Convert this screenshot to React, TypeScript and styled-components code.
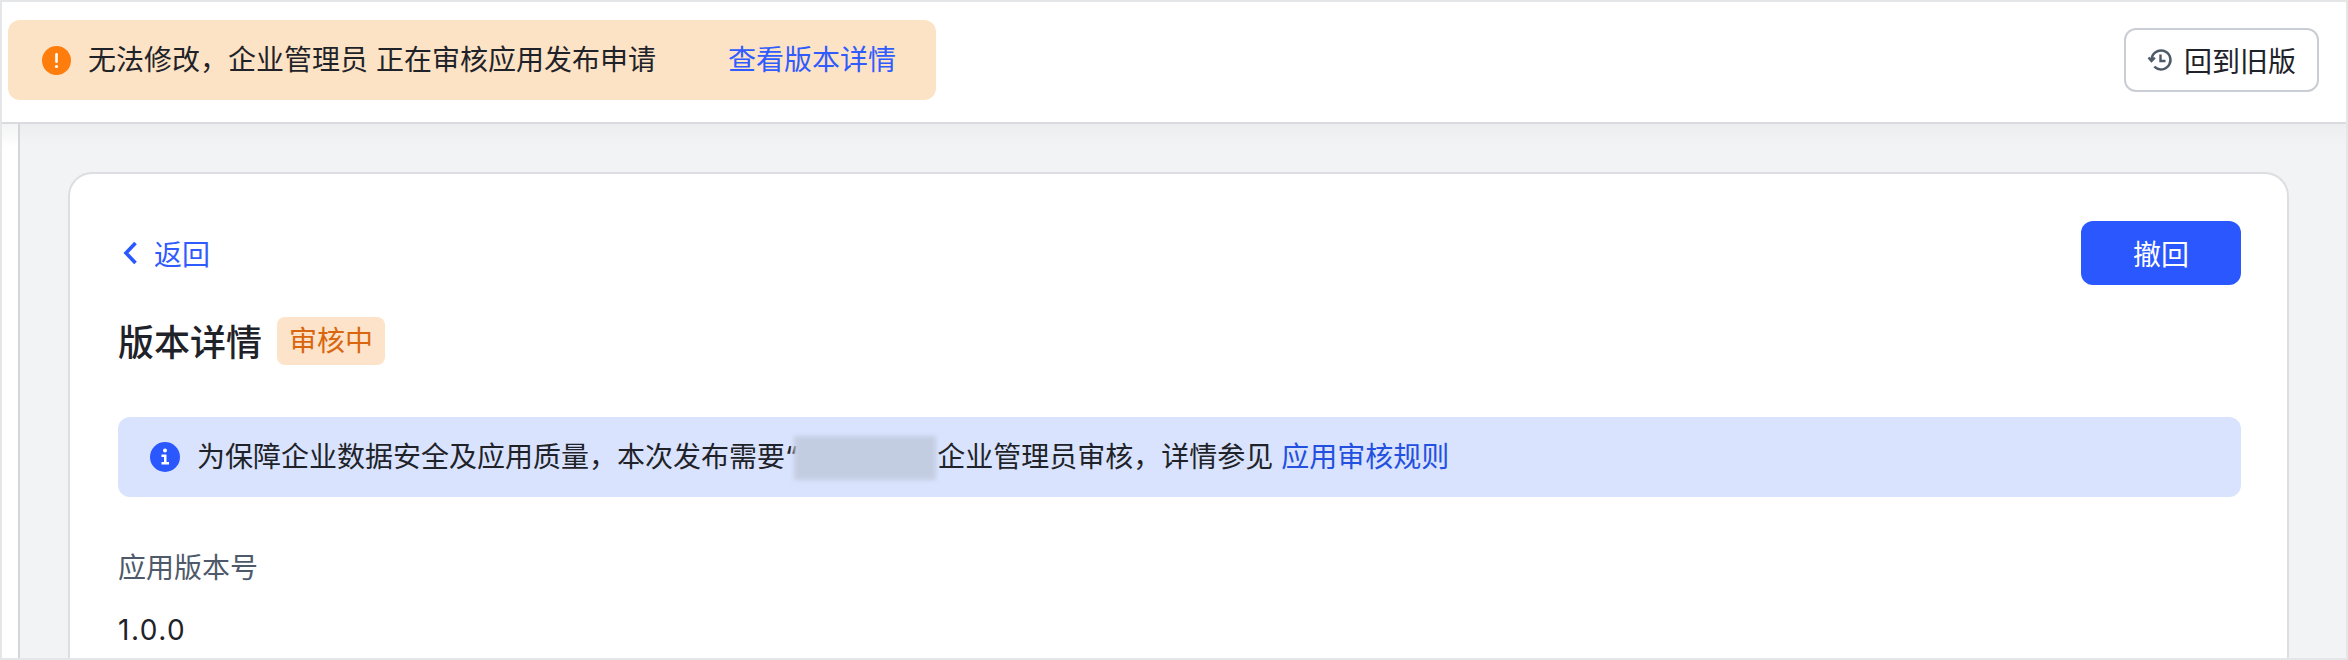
import React, { FC } from "react";
import styled, { createGlobalStyle } from "styled-components";

const FONT = `Inter, "Noto Sans CJK SC", sans-serif`;

const GlobalStyle = createGlobalStyle`
  html, body {
    margin: 0;
    padding: 0;
    background: #fff;
  }
  * {
    box-sizing: border-box;
  }
`;

const Page = styled.div`
  width: 2348px;
  height: 660px;
  overflow: hidden;
  display: flex;
  flex-direction: column;
  font-family: ${FONT};
  font-size: 28px;
  color: #1f2329;
  border: 2px solid #e5e6e8;
`;

const Header = styled.header`
  flex: none;
  height: 122px;
  display: flex;
  align-items: center;
  justify-content: space-between;
  padding: 0 27px 4px 6px;
  background: #fff;
  border-bottom: 2px solid #d9dbde;
`;

const Notice = styled.div`
  width: 928px;
  height: 80px;
  display: flex;
  align-items: center;
  padding-left: 34px;
  border-radius: 12px;
  background: #fde3c5;
`;

const NoticeIcon = styled.svg`
  flex: none;
  width: 29px;
  height: 29px;
  margin-right: 17px;
`;

const NoticeText = styled.span`
  line-height: 40px;
  white-space: pre;
`;

const NoticeLink = styled.a`
  margin-left: 72px;
  line-height: 40px;
  color: #2f5bff;
`;

const OldVersionButton = styled.button`
  width: 195px;
  height: 64px;
  display: flex;
  align-items: center;
  justify-content: center;
  gap: 11px;
  padding: 0 2px 0 2px;
  border: 2px solid #c9cdd4;
  border-radius: 12px;
  background: #fff;
  font: inherit;
  color: #1f2329;
`;

const Body = styled.div`
  flex: 1;
  min-height: 0;
  display: flex;
`;

const Rail = styled.div`
  flex: none;
  width: 18px;
  background: linear-gradient(#f3f4f5, #fff 24px);
  border-right: 2px solid #d4d6d9;
`;

const Content = styled.main`
  flex: 1;
  min-width: 0;
  padding: 48px 57px 0 48px;
  background: linear-gradient(#ecedef, #f2f3f5 20px);
`;

const Card = styled.section`
  height: 520px;
  padding: 47px 46px 0 48px;
  border: 2px solid #dcdee1;
  border-bottom: none;
  border-radius: 24px 24px 0 0;
  background: #fff;
`;

const TopRow = styled.div`
  display: flex;
  align-items: flex-start;
  justify-content: space-between;
  height: 64px;
`;

const BackLink = styled.a`
  display: flex;
  align-items: center;
  height: 64px;
  gap: 16px;
  padding-left: 5px;
  color: #2f5bff;
`;

const RevokeButton = styled.button`
  width: 160px;
  height: 64px;
  padding: 0;
  border: none;
  border-radius: 12px;
  background: #2b57ff;
  font: inherit;
  color: #fff;
`;

const TitleRow = styled.div`
  display: flex;
  align-items: center;
  gap: 15px;
  margin-top: 32px;
  height: 48px;
`;

const Title = styled.h2`
  margin: 0;
  padding-top: 3px;
  font-size: 36px;
  font-weight: 500;
  line-height: 48px;
`;

const StatusTag = styled.span`
  height: 48px;
  padding: 0 12px;
  border-radius: 8px;
  background: #fde3c9;
  color: #d9660f;
  line-height: 48px;
`;

const InfoBar = styled.div`
  height: 80px;
  margin-top: 52px;
  display: flex;
  align-items: center;
  padding-left: 32px;
  border-radius: 12px;
  background: #d9e3fd;
`;

const InfoIcon = styled.svg`
  flex: none;
  width: 30px;
  height: 30px;
  margin-right: 17px;
`;

const InfoText = styled.span`
  padding-top: 3px;
  line-height: 40px;
  white-space: pre;
`;

const Redacted = styled.span`
  display: inline-block;
  width: 142px;
  height: 44px;
  margin: -3px 1px 0 -3px;
  vertical-align: middle;
  background: #c3cde2;
  filter: blur(2px);
`;

const InfoLink = styled.a`
  margin-left: 8px;
  color: #2450e0;
`;

const Field = styled.div`
  margin-top: 50px;
`;

const FieldLabel = styled.div`
  padding-top: 1px;
  line-height: 40px;
  color: #4e5969;
`;

const FieldValue = styled.div`
  margin-top: 22px;
  line-height: 40px;
  letter-spacing: 1.5px;
  color: #1f2329;
`;

export const App: FC = () => {
  return (
    <Page>
      <GlobalStyle />
      <Header>
        <Notice>
          <NoticeIcon viewBox="0 0 29 29">
            <circle cx="14.5" cy="14.5" r="14.5" fill="#ff7d0d" />
            <rect x="13.2" y="7" width="2.6" height="10" rx="1.2" fill="#fff" />
            <circle cx="14.5" cy="20.5" r="1.6" fill="#fff" />
          </NoticeIcon>
          <NoticeText>无法修改，企业管理员 正在审核应用发布申请</NoticeText>
          <NoticeLink>查看版本详情</NoticeLink>
        </Notice>
        <OldVersionButton>
          <svg width="26" height="26" viewBox="0 0 26 26" fill="none" stroke="#4e5969" strokeWidth="2.4">
            <path d="M4.5 13a9.5 9.5 0 1 1 2.8 6.7" />
            <path d="M1.5 10.5l3 3.4 3.3-3.2" />
            <path d="M13.5 7.5V14h5" />
          </svg>
          回到旧版
        </OldVersionButton>
      </Header>
      <Body>
        <Rail />
        <Content>
          <Card>
            <TopRow>
              <BackLink>
                <svg width="15" height="24" viewBox="0 0 15 24" fill="none" stroke="#2b57ff" strokeWidth="3.6">
                  <path d="M12.5 2 3 12l9.5 10" />
                </svg>
                返回
              </BackLink>
              <RevokeButton>撤回</RevokeButton>
            </TopRow>
            <TitleRow>
              <Title>版本详情</Title>
              <StatusTag>审核中</StatusTag>
            </TitleRow>
            <InfoBar>
              <InfoIcon viewBox="0 0 30 30">
                <circle cx="15" cy="15" r="15" fill="#2b57ff" />
                <circle cx="15" cy="8.6" r="2" fill="#fff" />
                <path d="M11.5 12.5H16.5V20H19V22.5H11.5V20H14V15H11.5Z" fill="#fff" />
              </InfoIcon>
              <InfoText>
                为保障企业数据安全及应用质量，本次发布需要“
                <Redacted />
                企业管理员审核，详情参见
                <InfoLink>应用审核规则</InfoLink>
              </InfoText>
            </InfoBar>
            <Field>
              <FieldLabel>应用版本号</FieldLabel>
              <FieldValue>1.0.0</FieldValue>
            </Field>
          </Card>
        </Content>
      </Body>
    </Page>
  );
};

export default App;
